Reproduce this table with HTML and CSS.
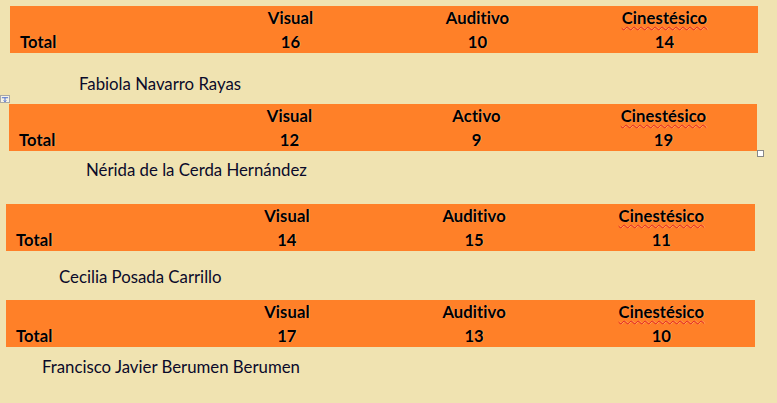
FILE: index.html
```html
<!DOCTYPE html>
<html lang="es">
<head>
<meta charset="utf-8">
<title>Estilos de aprendizaje</title>
<link rel="stylesheet" href="styles.css">
</head>
<body>
<div class="page">
  <section class="block b1">
    <table class="bar">
      <tr class="head"><td></td><td>Visual</td><td>Auditivo</td><td><span class="spell">Cinestésico</span></td></tr>
      <tr class="tot"><td class="lbl">Total</td><td>16</td><td>10</td><td>14</td></tr>
    </table>
    <p class="name n1">Fabiola Navarro Rayas</p>
  </section>
  <section class="block b2">
    <span class="move"><svg width="9" height="7" viewBox="0 0 9 7"><path d="M1 1.5H8M4.5 1.5V6M3 4.5L4.5 6L6 4.5" stroke="#3a5fcd" stroke-width="1" fill="none"/></svg></span>
    <table class="bar">
      <tr class="head"><td></td><td>Visual</td><td>Activo</td><td><span class="spell">Cinestésico</span></td></tr>
      <tr class="tot"><td class="lbl">Total</td><td>12</td><td>9</td><td>19</td></tr>
    </table>
    <span class="resize"></span>
    <p class="name n2">Nérida de la Cerda Hernández</p>
  </section>
  <section class="block b3">
    <table class="bar">
      <tr class="head"><td></td><td>Visual</td><td>Auditivo</td><td><span class="spell">Cinestésico</span></td></tr>
      <tr class="tot"><td class="lbl">Total</td><td>14</td><td>15</td><td>11</td></tr>
    </table>
    <p class="name n3">Cecilia Posada Carrillo</p>
  </section>
  <section class="block b4">
    <table class="bar">
      <tr class="head"><td></td><td>Visual</td><td>Auditivo</td><td><span class="spell">Cinestésico</span></td></tr>
      <tr class="tot"><td class="lbl">Total</td><td>17</td><td>13</td><td>10</td></tr>
    </table>
    <p class="name n4">Francisco Javier Berumen Berumen</p>
  </section>
</div>
</body>
</html>
```
FILE: styles.css
```css
html, body {
  margin: 0;
  padding: 0;
  background: #f0e3b1;
  width: 777px;
  height: 403px;
  overflow: hidden;
}
body {
  font-family: Lato, "Open Sans", sans-serif;
  font-variant-ligatures: none;
  color: #000;
}
.page {
  padding-top: 6px;
}
.block {
  position: relative;
}
.bar {
  width: 748px;
  border-collapse: collapse;
  table-layout: fixed;
  background: #ff8028;
  font-weight: bold;
  font-size: 16.8px;
}
.bar td {
  padding: 0;
  text-align: center;
  line-height: 20px;
  text-shadow: 1px 0 0 rgba(255,255,255,0.3);
}
.bar td.lbl {
  text-align: left;
  padding-left: 10px;
}
.bar tr.head td { height: 24px; vertical-align: middle; }
.bar tr.tot td { height: 23px; vertical-align: middle; }
.spell {
  text-decoration: underline wavy #e02020;
  text-decoration-thickness: 1px;
  text-underline-offset: 2px;
}
.name {
  margin: 0;
  font-size: 16.8px;
  line-height: 20px;
  color: #0a0a2a;
}
.b1 .bar { margin-left: 10px; }
.b2 .bar { margin-left: 9px; }
.b3 .bar, .b4 .bar { margin-left: 6px; width: 749px; }
.n1 { margin: 21px 0 10px 79px; }
.n2 { margin: 9px 0 24px 86px; }
.n3 { margin: 16px 0 13px 59px; }
.n4 { margin: 10px 0 0 42px; }
.move {
  position: absolute;
  left: 0;
  top: -9px;
  width: 8px;
  height: 6px;
  background: #f8f4e4;
  border: 1px solid #a8a8a8;
  display: flex;
  align-items: center;
  justify-content: center;
  overflow: hidden;
}
.move svg { display: block; }
.resize {
  position: absolute;
  left: 757px;
  top: 46px;
  width: 5px;
  height: 5px;
  background: #fff;
  border: 1px solid #888;
}
```
